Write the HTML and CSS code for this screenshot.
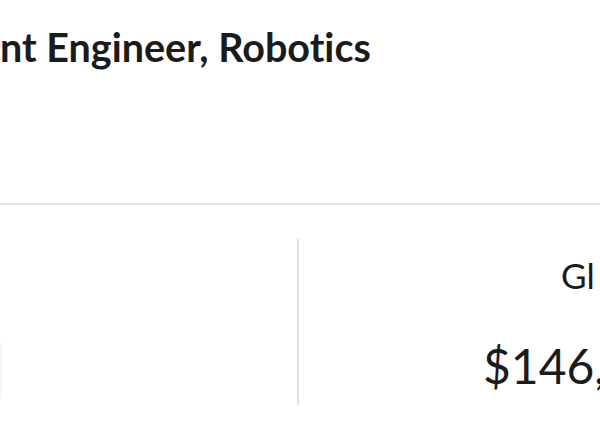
FILE: index.html
```html
<!DOCTYPE html>
<html>
<head>
<meta charset="utf-8">
<link rel="stylesheet" href="styles.css">
</head>
<body>
<div class="page">
  <header class="head">
    <h1 class="title">nt Engineer, Robotics</h1>
  </header>
  <section class="stats">
    <div class="stat stat-left">
      <div class="stat-edge"></div>
    </div>
    <div class="stat stat-right">
      <div class="stat-label">Gl</div>
      <div class="stat-value">$146,</div>
    </div>
  </section>
</div>
</body>
</html>
```

FILE: styles.css
```css
html, body {
  margin: 0;
  padding: 0;
  background: #ffffff;
  overflow: hidden;
}
body {
  width: 600px;
  height: 428px;
  font-family: Lato, "Noto Sans", sans-serif;
  color: #1b1b1b;
  font-variant-ligatures: none;
}
.page {
  width: 600px;
}
.head {
  height: 205px;
  border-bottom: 2px solid #e5e5e5;
  box-sizing: border-box;
  padding-top: 23px;
}
.title {
  margin: 0;
  font-size: 39.5px;
  font-weight: 700;
  line-height: 48px;
  white-space: nowrap;
}
.stats {
  display: flex;
  padding-top: 34px;
}
.stat-left {
  width: 297px;
  height: 166px;
  flex: none;
  border-right: 2px solid #e3e3e3;
  position: relative;
}
.stat-edge {
  position: absolute;
  left: 0;
  top: 104px;
  width: 1px;
  height: 55px;
  background: #f2f2f2;
}
.stat-right {
  flex: 1;
  display: flex;
  flex-direction: column;
  align-items: flex-start;
  white-space: nowrap;
}
.stat-label {
  font-size: 35px;
  line-height: 42px;
  margin-top: 15px;
  margin-left: 262px;
}
.stat-value {
  font-size: 48px;
  line-height: 60px;
  margin-top: 40px;
  margin-left: 184px;
}
```
